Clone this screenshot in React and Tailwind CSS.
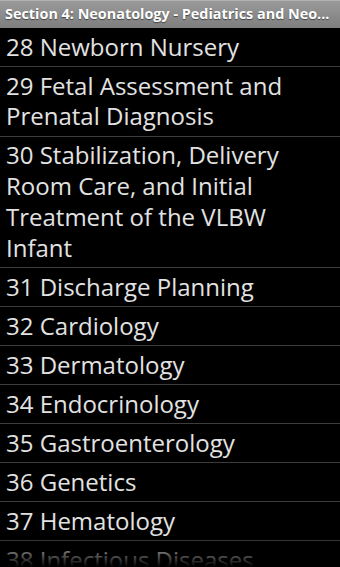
import React from "react";

const items = [
  "28 Newborn Nursery",
  "29 Fetal Assessment and Prenatal Diagnosis",
  "30 Stabilization, Delivery Room Care, and Initial Treatment of the VLBW Infant",
  "31 Discharge Planning",
  "32 Cardiology",
  "33 Dermatology",
  "34 Endocrinology",
  "35 Gastroenterology",
  "36 Genetics",
  "37 Hematology",
  "38 Infectious Diseases",
  "39 Metabolic Disorders",
];

export default function App() {
  return (
    <div className="relative w-[340px] h-[567px] overflow-hidden bg-black" style={{ fontFamily: '"Open Sans", "Noto Sans", sans-serif' }}>
      <div className="h-[28px] flex items-center px-[5px] bg-gradient-to-b from-[#9a9a9a] to-[#7e7e7e] border-t border-[#b0b0b0]">
        <div className="text-white font-bold text-[14.4px] leading-none whitespace-nowrap" style={{ textShadow: "0 1px 1px rgba(0,0,0,0.5)" }}>
          Section 4: Neonatology - Pediatrics and Neo...
        </div>
      </div>
      <div className="flex flex-col">
        {items.map((t) => (
          <div key={t} className="pl-[6px] pr-[4px] py-[3.6px] border-b border-[#3c3c3c] text-[#e2e2e2] text-[24px] leading-[30.8px]">
            {t}
          </div>
        ))}
      </div>
      <div className="absolute left-0 right-0 bottom-0 h-[30px] bg-gradient-to-b from-transparent to-black" />
    </div>
  );
}
